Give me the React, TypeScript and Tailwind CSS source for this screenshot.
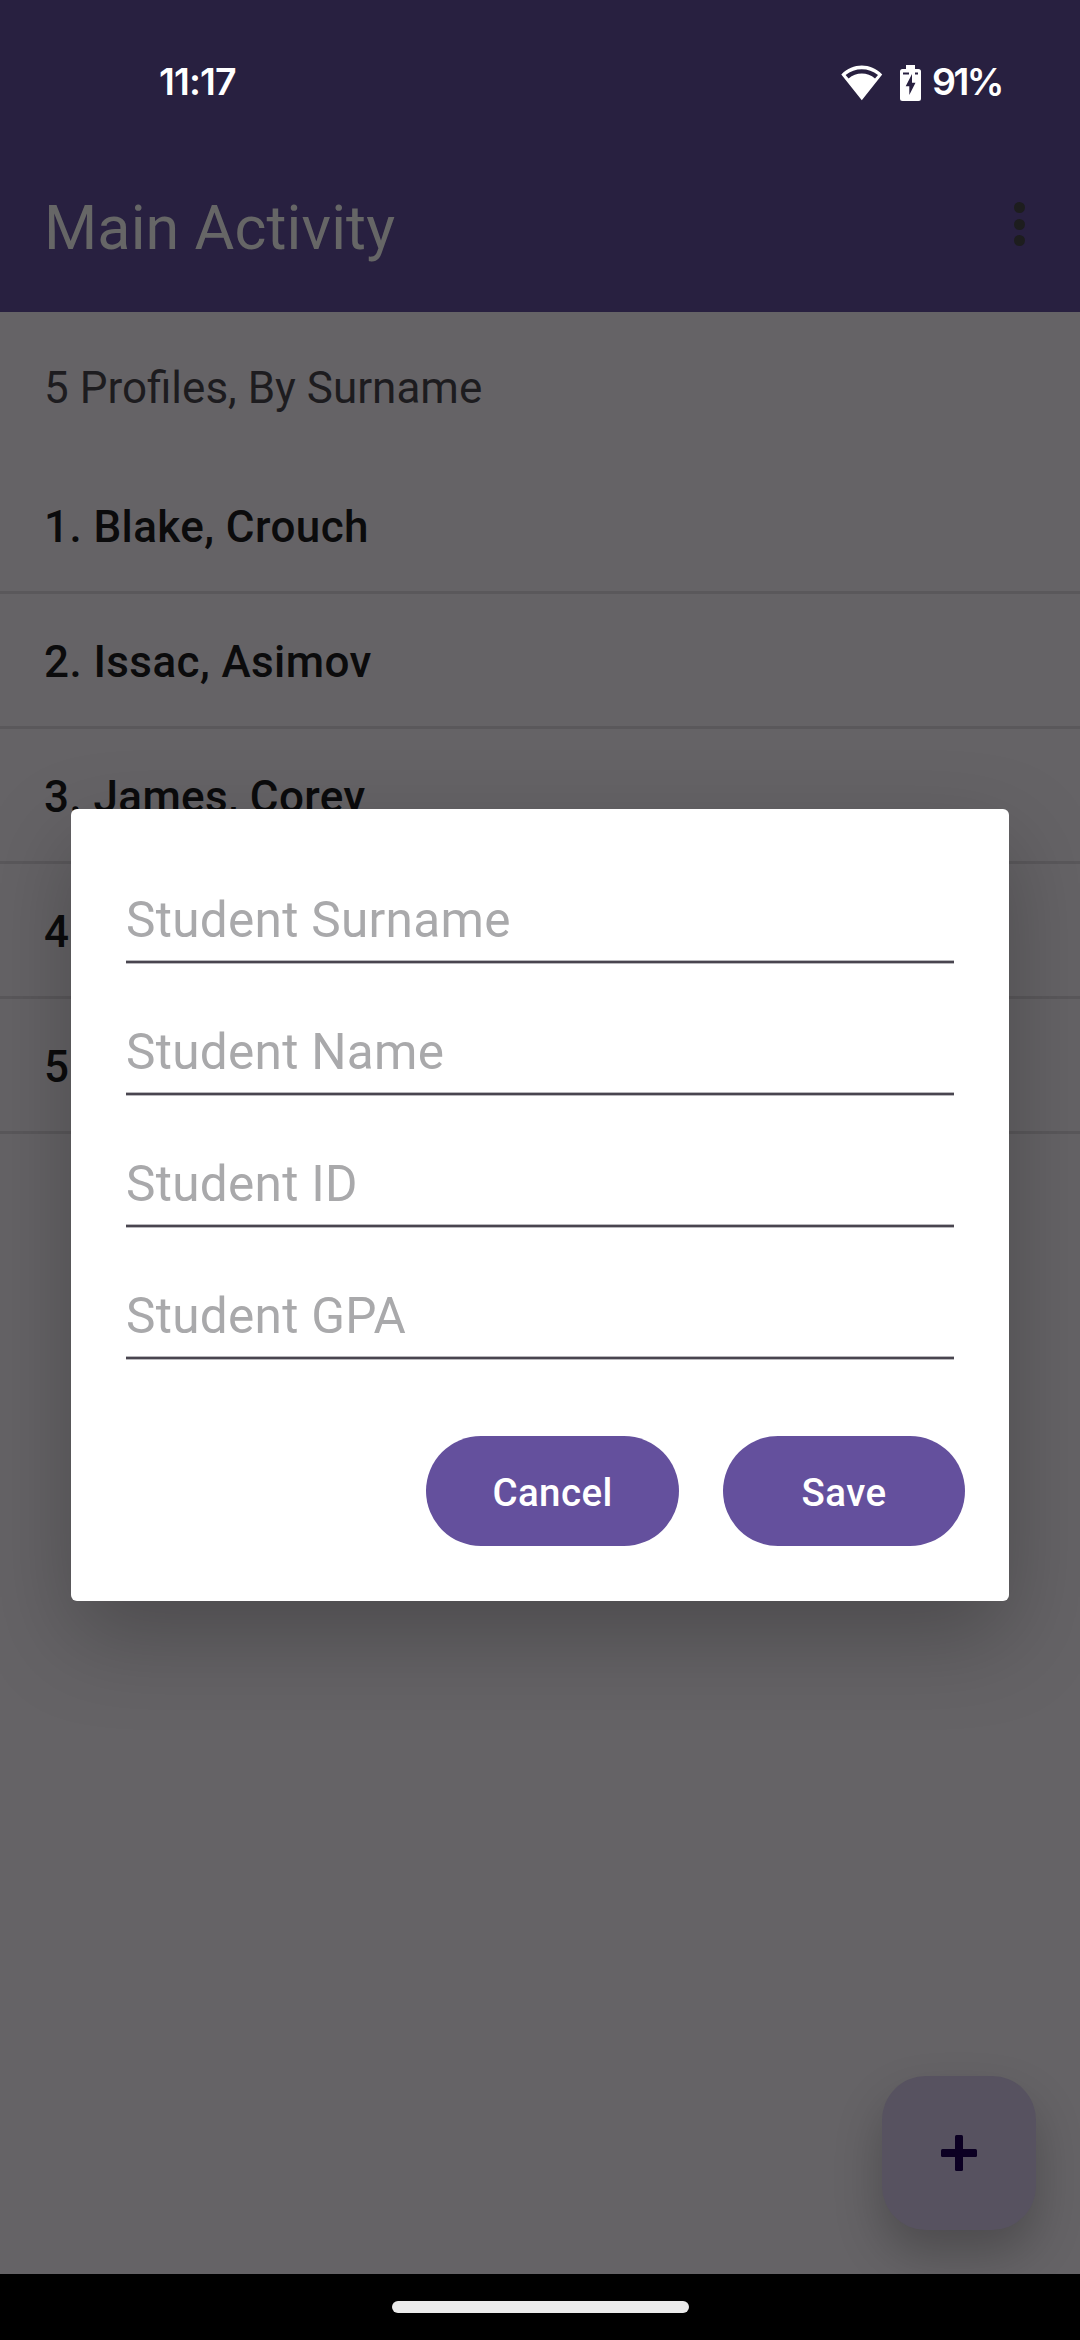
import React from "react";

const profiles = ["1. Blake, Crouch", "2. Issac, Asimov", "3. James, Corey", "4", "5"];
const fields = ["Student Surname", "Student Name", "Student ID", "Student GPA"];

function WifiIcon() {
  return (
    <svg width="42" height="36" viewBox="0 0 42 36" className="block shrink-0">
      <path fillRule="evenodd" fill="#fff" d="M0.3 9.500C12-2.400 29.500-2.400 41.200 9.500L20.800 35.200ZM4.600 10L7.600 13.600C15 6.900 26.600 6.900 34 13.600L37 10C27.400 2.200 14.200 2.200 4.600 10Z" />
    </svg>
  );
}

function BatteryIcon() {
  return (
    <svg width="21" height="36" viewBox="0 0 21 36" className="block shrink-0">
      <path fill="#fff" d="M6 0H15V4H18.500Q21 4 21 6.500V33.500Q21 36 18.500 36H2.500Q0 36 0 33.500V6.500Q0 4 2.500 4H6Z" />
      <path fill="#282040" d="M12 9V17.800H15.500L9.300 30V21.200H5.700Z" />
      <path stroke="#282040" strokeWidth="2" d="M3 8.500H9M15 8.500H18" />
    </svg>
  );
}

export default function App() {
  return (
    <div className="relative flex h-[2340px] w-[1080px] flex-col overflow-hidden bg-[#656366] font-['Roboto',sans-serif]">
      <header className="flex h-[312px] flex-col bg-[#282040]">
        <div className="flex h-[142px] items-center justify-between pr-[78px] pl-[159px] pt-[24px] font-['Inter',sans-serif] text-[37.5px] font-semibold text-white">
          <span className="mb-[2px] tracking-[-0.900px]">11:17</span>
          <div className="flex items-center">
            <WifiIcon />
            <span className="ml-[17px]"><BatteryIcon /></span>
            <span className="mb-[1px] ml-[11px] w-[70px] tracking-[-2.500px]">91%</span>
          </div>
        </div>
        <div className="flex h-[170px] items-center justify-between pr-[55px] pl-[44px]">
          <h1 className="mt-[2px] text-[61px] leading-[72px] tracking-[0.100px] text-[#666666]">Main Activity</h1>
          <div className="mb-[6px] flex flex-col gap-[5.500px]">
            <i className="size-[11px] rounded-full bg-[#1d1d1e]" />
            <i className="size-[11px] rounded-full bg-[#1d1d1e]" />
            <i className="size-[11px] rounded-full bg-[#1d1d1e]" />
          </div>
        </div>
      </header>
      <main className="flex-1">
        <p className="flex h-[147px] items-center pt-[5px] pl-[44px] text-[44px] text-[#1d1c1f]">5 Profiles, By Surname</p>
        <ul>
          {profiles.map((p) => (
            <li key={p} className="flex h-[135px] items-center border-b-[3px] border-[#5a585b] pt-[4px] pl-[44px] text-[44px] font-medium tracking-[0.410px] text-[#0b0b0c]">
              {p}
            </li>
          ))}
        </ul>
      </main>
      <button className="absolute top-[2076px] left-[882px] flex size-[154px] items-center justify-center rounded-[44px] bg-[#575260] shadow-[0_24px_48px_rgba(0,0,0,0.24)]">
        <svg width="36" height="36" viewBox="0 0 36 36">
          <rect x="14" width="8" height="36" rx="1.500" fill="#0c0023" />
          <rect y="14" width="36" height="8" rx="1.500" fill="#0c0023" />
        </svg>
      </button>
      <nav className="relative flex h-[66px] justify-center bg-black pt-[27px]">
        <div className="h-[12px] w-[297px] rounded-full bg-[#ebebeb]" />
      </nav>
      <section className="absolute top-[809px] left-[71px] flex h-[792px] w-[938px] flex-col rounded-[6px] bg-white pt-[23px] shadow-[0_35px_90px_rgba(0,0,0,0.25)]">
        {fields.map((f) => (
          <label key={f} className="mx-[55px] flex h-[132px] flex-col justify-end">
            <span className="mb-[11px] text-[49.5px] leading-[58px] tracking-[0.300px] text-[#a9a9ab]">{f}</span>
            <span className="h-[4px] border-y border-[#b9b8bc] bg-[#49454f]" />
          </label>
        ))}
        <div className="mt-[76px] mr-[44px] flex h-[110px] justify-end gap-[44px] text-[38.5px] font-medium tracking-[0.400px] text-white">
          <button className="w-[253px] rounded-full bg-[#64509d] pt-[3px]">Cancel</button>
          <button className="w-[242px] rounded-full bg-[#64509d] pt-[3px]">Save</button>
        </div>
      </section>
    </div>
  );
}
